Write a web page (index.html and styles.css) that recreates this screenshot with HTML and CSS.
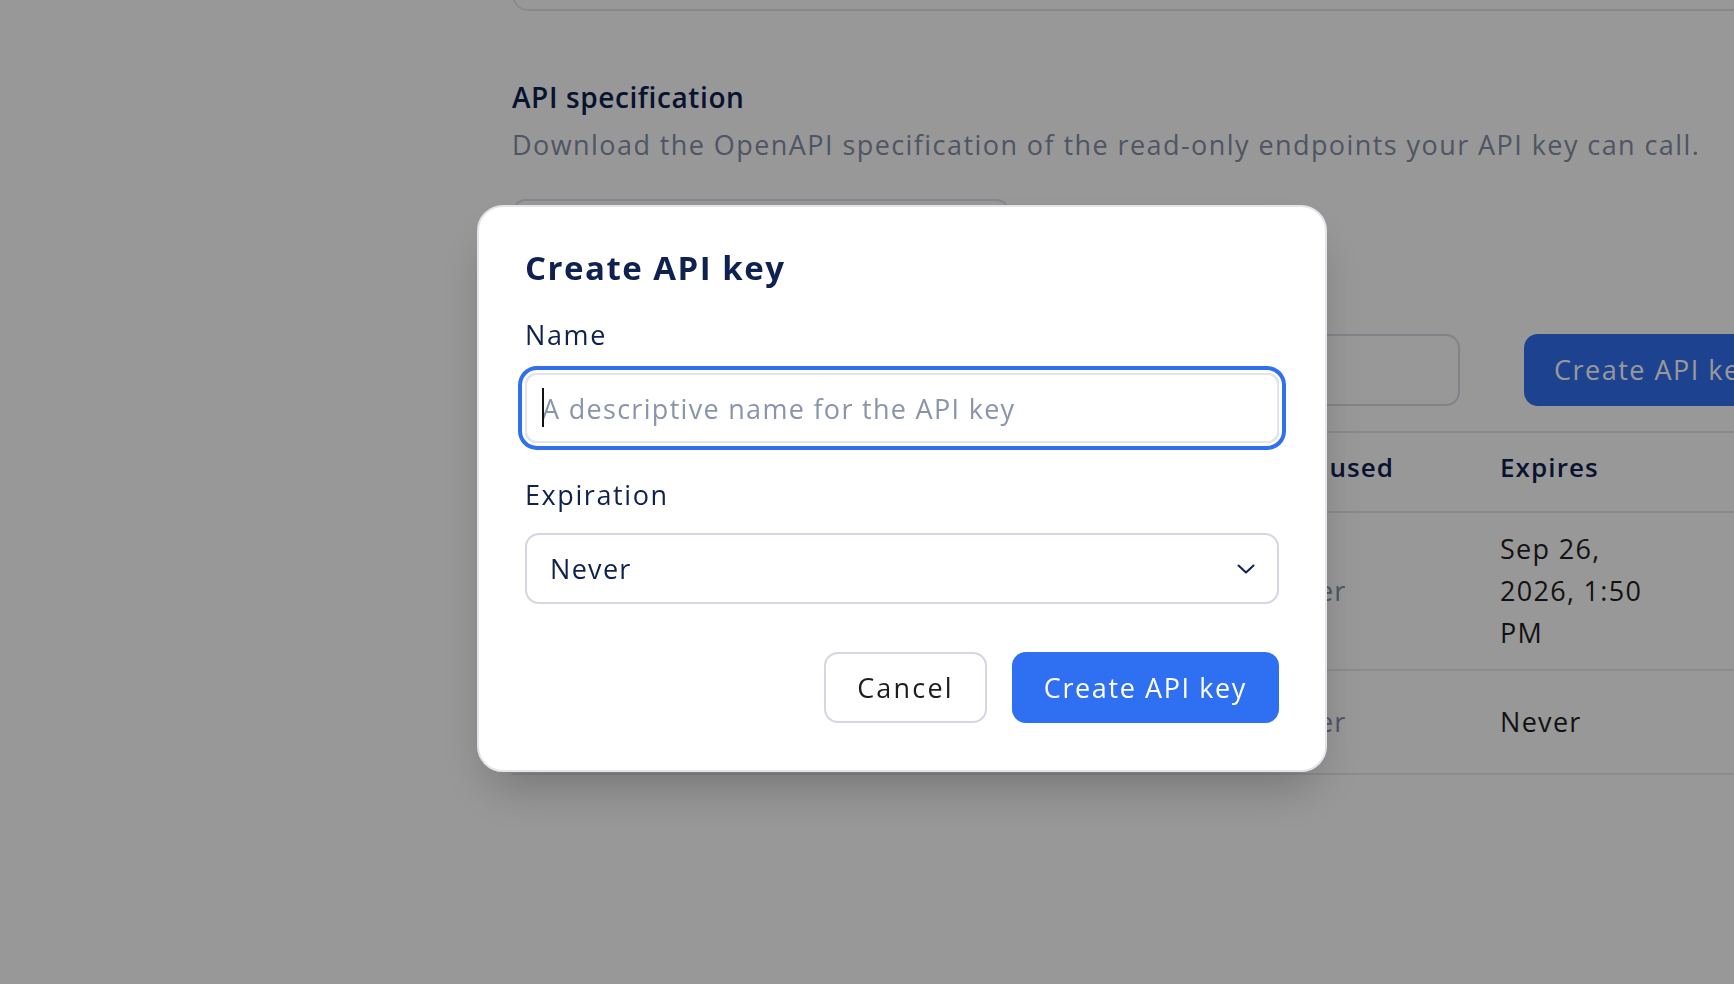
FILE: index.html
```html
<!DOCTYPE html>
<html lang="en">
<head>
<meta charset="utf-8">
<title>API keys</title>
<link rel="stylesheet" href="styles.css">
</head>
<body>
<div class="page">
  <main class="content">
    <div class="card-top"></div>

    <section class="spec">
      <h2 class="spec-title">API specification</h2>
      <p class="spec-desc">Download the OpenAPI specification of the read-only endpoints your API key can call.</p>
      <button class="download-btn" type="button" aria-label="Download OpenAPI specification"></button>
    </section>

    <section class="keys">
      <div class="toolbar">
        <input class="search" type="text" aria-label="Search API keys">
        <button class="bg-primary" type="button">Create API key</button>
      </div>

      <div class="table">
        <div class="row head">
          <div class="cell"></div>
          <div class="cell"></div>
          <div class="cell">Last used</div>
          <div class="cell">Expires</div>
          <div class="cell"></div>
        </div>
        <div class="row">
          <div class="cell"></div>
          <div class="cell"></div>
          <div class="cell muted">Never</div>
          <div class="cell dark">Sep 26, 2026, 1:50 PM</div>
          <div class="cell"></div>
        </div>
        <div class="row row-tall">
          <div class="cell"></div>
          <div class="cell"></div>
          <div class="cell muted">Never</div>
          <div class="cell dark">Never</div>
          <div class="cell"></div>
        </div>
      </div>
    </section>
  </main>
</div>

<div class="overlay"></div>

<div class="modal" role="dialog" aria-labelledby="modal-title">
  <h1 class="modal-title" id="modal-title">Create API key</h1>

  <div class="field">
    <label class="field-label" for="key-name">Name</label>
    <div class="input-wrap is-focused">
      <input class="text-input" id="key-name" type="text" placeholder="A descriptive name for the API key">
    </div>
  </div>

  <div class="field field-gap">
    <label class="field-label" for="key-exp">Expiration</label>
    <div class="select-wrap">
      <select class="select" id="key-exp">
        <option>Never</option>
        <option>7 days</option>
        <option>30 days</option>
        <option>90 days</option>
      </select>
      <svg class="chevron" width="18" height="10" viewBox="0 0 18 10" aria-hidden="true">
        <path d="M1.5 1.5 L9 8.5 L16.5 1.5" fill="none" stroke="#0f2150" stroke-width="2" stroke-linecap="round" stroke-linejoin="round"/>
      </svg>
    </div>
  </div>

  <div class="actions">
    <button class="btn btn-secondary" type="button">Cancel</button>
    <button class="btn btn-primary" type="button">Create API key</button>
  </div>
</div>
</body>
</html>
```

FILE: styles.css
```css
* { box-sizing: border-box; }

html, body {
  margin: 0;
  height: 984px;
  overflow: hidden;
}

body {
  background: #ffffff;
  font-family: "Open Sans", "Noto Sans", sans-serif;
  font-size: 27px;
  letter-spacing: 1.3px;
  line-height: 42px;
  color: #0f2150;
}

.page {
  width: 1734px;
  overflow: hidden;
}

.content {
  margin-left: 512px;
  width: 1500px;
}

.card-top {
  height: 80px;
  margin-top: -69px;
  border: 2px solid #e5e7eb;
  border-radius: 16px;
}

.spec { margin-top: 64px; }

.spec-title {
  margin: 0;
  font-size: 28px;
  line-height: 44px;
  letter-spacing: 0.6px;
  font-weight: 600;
  color: #0f2150;
}

.spec-desc {
  margin: 5px 0 0;
  color: #858fa6;
  letter-spacing: 1.43px;
  white-space: nowrap;
}

.download-btn {
  display: block;
  margin-top: 33px;
  width: 498px;
  height: 71px;
  border: 2px solid #dfe2ea;
  border-radius: 14px;
  background: #fff;
}

.toolbar {
  margin-top: 64px;
  display: flex;
  gap: 64px;
  height: 72px;
}

.search {
  width: 948px;
  height: 72px;
  border: 2px solid #d9dce6;
  border-radius: 14px;
  padding: 0 24px;
  font: inherit;
  background: #fff;
}

.bg-primary {
  height: 72px;
  padding: 0 50px 0 30px;
  border: 0;
  border-radius: 14px;
  background: #2f6ff1;
  color: #fff;
  font: inherit;
  letter-spacing: 1.5px;
  font-weight: 500;
  white-space: nowrap;
}

.table {
  margin-top: 25px;
  border-top: 2px solid #e6e9f0;
}

.row {
  display: grid;
  grid-template-columns: 400px 353px 235px 190px 200px;
  align-items: center;
  border-bottom: 2px solid #e6e9f0;
}

.row-tall { min-height: 104px; }

.cell {
  padding: 15px 24px 15px 0;
}

.head .cell {
  padding: 13px 24px 23px 0;
  font-size: 26px;
  font-weight: 600;
  letter-spacing: 1.1px;
  color: #0f2150;
}

.muted { color: #858fa6; }
.dark { color: #1f1f22; }

.overlay {
  position: fixed;
  inset: 0;
  background: rgba(0, 0, 0, 0.404);
}

.modal {
  position: fixed;
  left: 477px;
  top: 205px;
  width: 850px;
  padding: 41px 46px 47px;
  background: #fff;
  border: 2px solid #e4e5ea;
  border-radius: 26px;
  box-shadow: 0 25px 50px -12px rgba(0, 0, 0, 0.25);
  display: flex;
  flex-direction: column;
}

.modal-title {
  margin: 0;
  font-size: 33px;
  line-height: 40px;
  letter-spacing: 1.5px;
  font-weight: 700;
  color: #0f2150;
}

.field {
  margin-top: 26px;
  display: flex;
  flex-direction: column;
  gap: 17px;
}

.field-gap { margin-top: 31px; }

.field-label {
  font-weight: 500;
  letter-spacing: 1.6px;
  color: #0f2150;
}

.input-wrap {
  position: relative;
  border-radius: 12px;
}

.input-wrap.is-focused {
  box-shadow: 0 0 0 3px #fff, 0 0 0 7px #2f6ff1;
}

.input-wrap.is-focused::before {
  content: "";
  position: absolute;
  left: 17px;
  top: 15px;
  width: 2px;
  height: 39px;
  background: #111;
}

.text-input {
  display: block;
  width: 100%;
  height: 70px;
  padding: 0 15px;
  border: 2px solid #e2e5ea;
  border-radius: 12px;
  font: inherit;
  letter-spacing: inherit;
  color: #0f2150;
  outline: none;
}

.text-input::placeholder { color: #8a94ab; }

.select-wrap { position: relative; }

.select {
  display: block;
  width: 100%;
  height: 71px;
  padding: 0 60px 0 23px;
  border: 2px solid #d5d6e1;
  border-radius: 14px;
  background: #fff;
  font: inherit;
  letter-spacing: inherit;
  color: #0f2150;
  appearance: none;
  -webkit-appearance: none;
}

.chevron {
  position: absolute;
  right: 24px;
  top: 31px;
}

.actions {
  margin-top: 48px;
  display: flex;
  justify-content: flex-end;
  gap: 25px;
}

.btn {
  height: 71px;
  padding: 0 32px;
  border-radius: 14px;
  font: inherit;
  letter-spacing: inherit;
  font-weight: 500;
  white-space: nowrap;
}

.btn-secondary {
  background: #fff;
  border: 2px solid #d5d6e1;
  color: #1c1c1e;
  padding: 0 31px;
  letter-spacing: 2.2px;
}

.btn-primary {
  background: #2f6ff1;
  border: 0;
  color: #fff;
  padding: 0 32px;
  letter-spacing: 1.6px;
}
```
